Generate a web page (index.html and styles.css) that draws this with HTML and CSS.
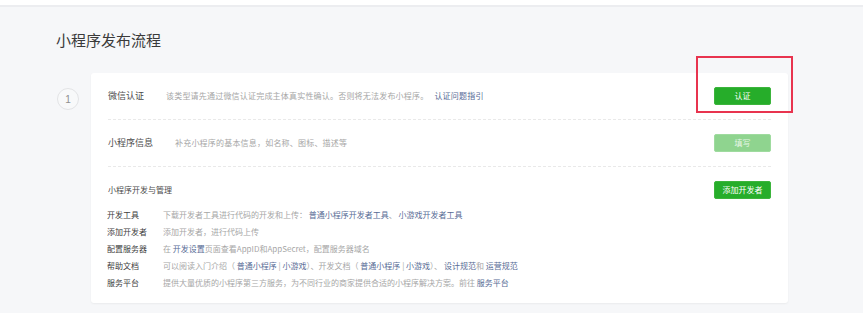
FILE: index.html
```html
<!DOCTYPE html>
<html lang="zh-CN">
<head>
<meta charset="utf-8">
<title>小程序发布流程</title>
<link rel="stylesheet" href="styles.css">
</head>
<body>
<div class="topbar"></div>
<main class="page">
  <h1 class="title">小程序发布流程</h1>
  <div class="flow">
    <div class="step-num">1</div>
    <div class="card">
      <div class="highlight"></div>
      <div class="row">
        <span class="row-label">微信认证</span>
        <span class="row-desc">该类型请先通过微信认证完成主体真实性确认。否则将无法发布小程序。<a class="link gap" href="#">认证问题指引</a></span>
        <button class="btn">认证</button>
      </div>
      <div class="row">
        <span class="row-label">小程序信息</span>
        <span class="row-desc">补充小程序的基本信息，如名称、图标、描述等</span>
        <button class="btn btn-disabled">填写</button>
      </div>
      <div class="section">
        <div class="section-head">
          <span class="section-title">小程序开发与管理</span>
          <button class="btn">添加开发者</button>
        </div>
        <ul class="items">
          <li class="item"><span class="item-label">开发工具</span><span class="item-desc">下载开发者工具进行代码的开发和上传： <a class="link" href="#">普通小程序开发者工具</a>、 <a class="link" href="#">小游戏开发者工具</a></span></li>
          <li class="item"><span class="item-label">添加开发者</span><span class="item-desc">添加开发者，进行代码上传</span></li>
          <li class="item"><span class="item-label">配置服务器</span><span class="item-desc">在 <a class="link" href="#">开发设置</a>页面查看AppID和AppSecret，配置服务器域名</span></li>
          <li class="item"><span class="item-label">帮助文档</span><span class="item-desc">可以阅读入门介绍（ <a class="link" href="#">普通小程序</a> | <a class="link" href="#">小游戏</a>）、开发文档（ <a class="link" href="#">普通小程序</a> | <a class="link" href="#">小游戏</a>）、 <a class="link" href="#">设计规范</a>和 <a class="link" href="#">运营规范</a></span></li>
          <li class="item"><span class="item-label">服务平台</span><span class="item-desc">提供大量优质的小程序第三方服务，为不同行业的商家提供合适的小程序解决方案。前往 <a class="link" href="#">服务平台</a></span></li>
        </ul>
      </div>
    </div>
  </div>
</main>
</body>
</html>
```
FILE: styles.css
```css
* { box-sizing: border-box; }
html, body {
  margin: 0;
  padding: 0;
}
body {
  background: #f6f7f9;
  font-family: "Noto Sans CJK SC", "Noto Sans", sans-serif;
  color: #353535;
  height: 313px;
  overflow: hidden;
}
.topbar {
  height: 7px;
  background: #fff;
  border-bottom: 2px solid #ecedf0;
}
.page {
  padding-left: 56px;
  width: 788px;
}
.title {
  margin: 23px 0 0;
  font-size: 15px;
  line-height: 20px;
  font-weight: normal;
  color: #3a3a3a;
}
.flow {
  display: flex;
  align-items: flex-start;
  gap: 12px;
  margin-top: 23px;
  padding-left: 1px;
}
.step-num {
  width: 22px;
  height: 22px;
  flex: none;
  margin-top: 15px;
  border: 1px solid #e3e4e6;
  border-radius: 50%;
  display: flex;
  align-items: center;
  justify-content: center;
  font-size: 10px;
  color: #8f8f8f;
  font-family: "Liberation Sans", sans-serif;
  background: #f8f9fa;
}
.card {
  position: relative;
  flex: 1;
  background: #fff;
  border-radius: 3px;
  box-shadow: 0 1px 2px rgba(0,0,0,0.05);
  padding: 0 17px;
}
.highlight {
  position: absolute;
  left: 605px;
  top: -17px;
  width: 97px;
  height: 57px;
  border: 2px solid #e8344f;
  pointer-events: none;
}
.row {
  display: flex;
  align-items: center;
  height: 47px;
  border-bottom: 1px dashed #e9e9e9;
}
.row-label {
  font-size: 9px;
  line-height: 14px;
  color: #4a4a4a;
  margin-right: 22px;
}
.row-desc {
  flex: 1;
  font-size: 8px;
  line-height: 14px;
  color: #a6a6a6;
  letter-spacing: 0.2px;
}
.link {
  color: #576b95;
  text-decoration: none;
}
.gap { margin-left: 6px; }
.btn {
  width: 57px;
  height: 18px;
  padding: 0;
  border: 1px solid #3cb43c;
  border-radius: 2px;
  background: #26ad2a;
  color: #fff;
  font-family: inherit;
  font-size: 8px;
  line-height: 16px;
  flex: none;
}
.btn-disabled {
  background: #8fd48f;
  border-color: #9fdb9f;
  color: #e6f6e6;
}
.section {
  padding: 14px 0 12px;
}
.section-head {
  display: flex;
  align-items: center;
  justify-content: space-between;
  height: 18px;
}
.section-title {
  font-size: 8px;
  line-height: 14px;
  color: #4a4a4a;
}
.items {
  list-style: none;
  margin: 7px 0 0;
  padding: 0;
}
.item {
  display: flex;
  height: 17px;
  align-items: center;
  font-size: 8px;
  line-height: 17px;
}
.item-label {
  width: 56px;
  flex: none;
  color: #404040;
  margin-left: -1px;
}
.item-desc {
  color: #a6a6a6;
}
```
